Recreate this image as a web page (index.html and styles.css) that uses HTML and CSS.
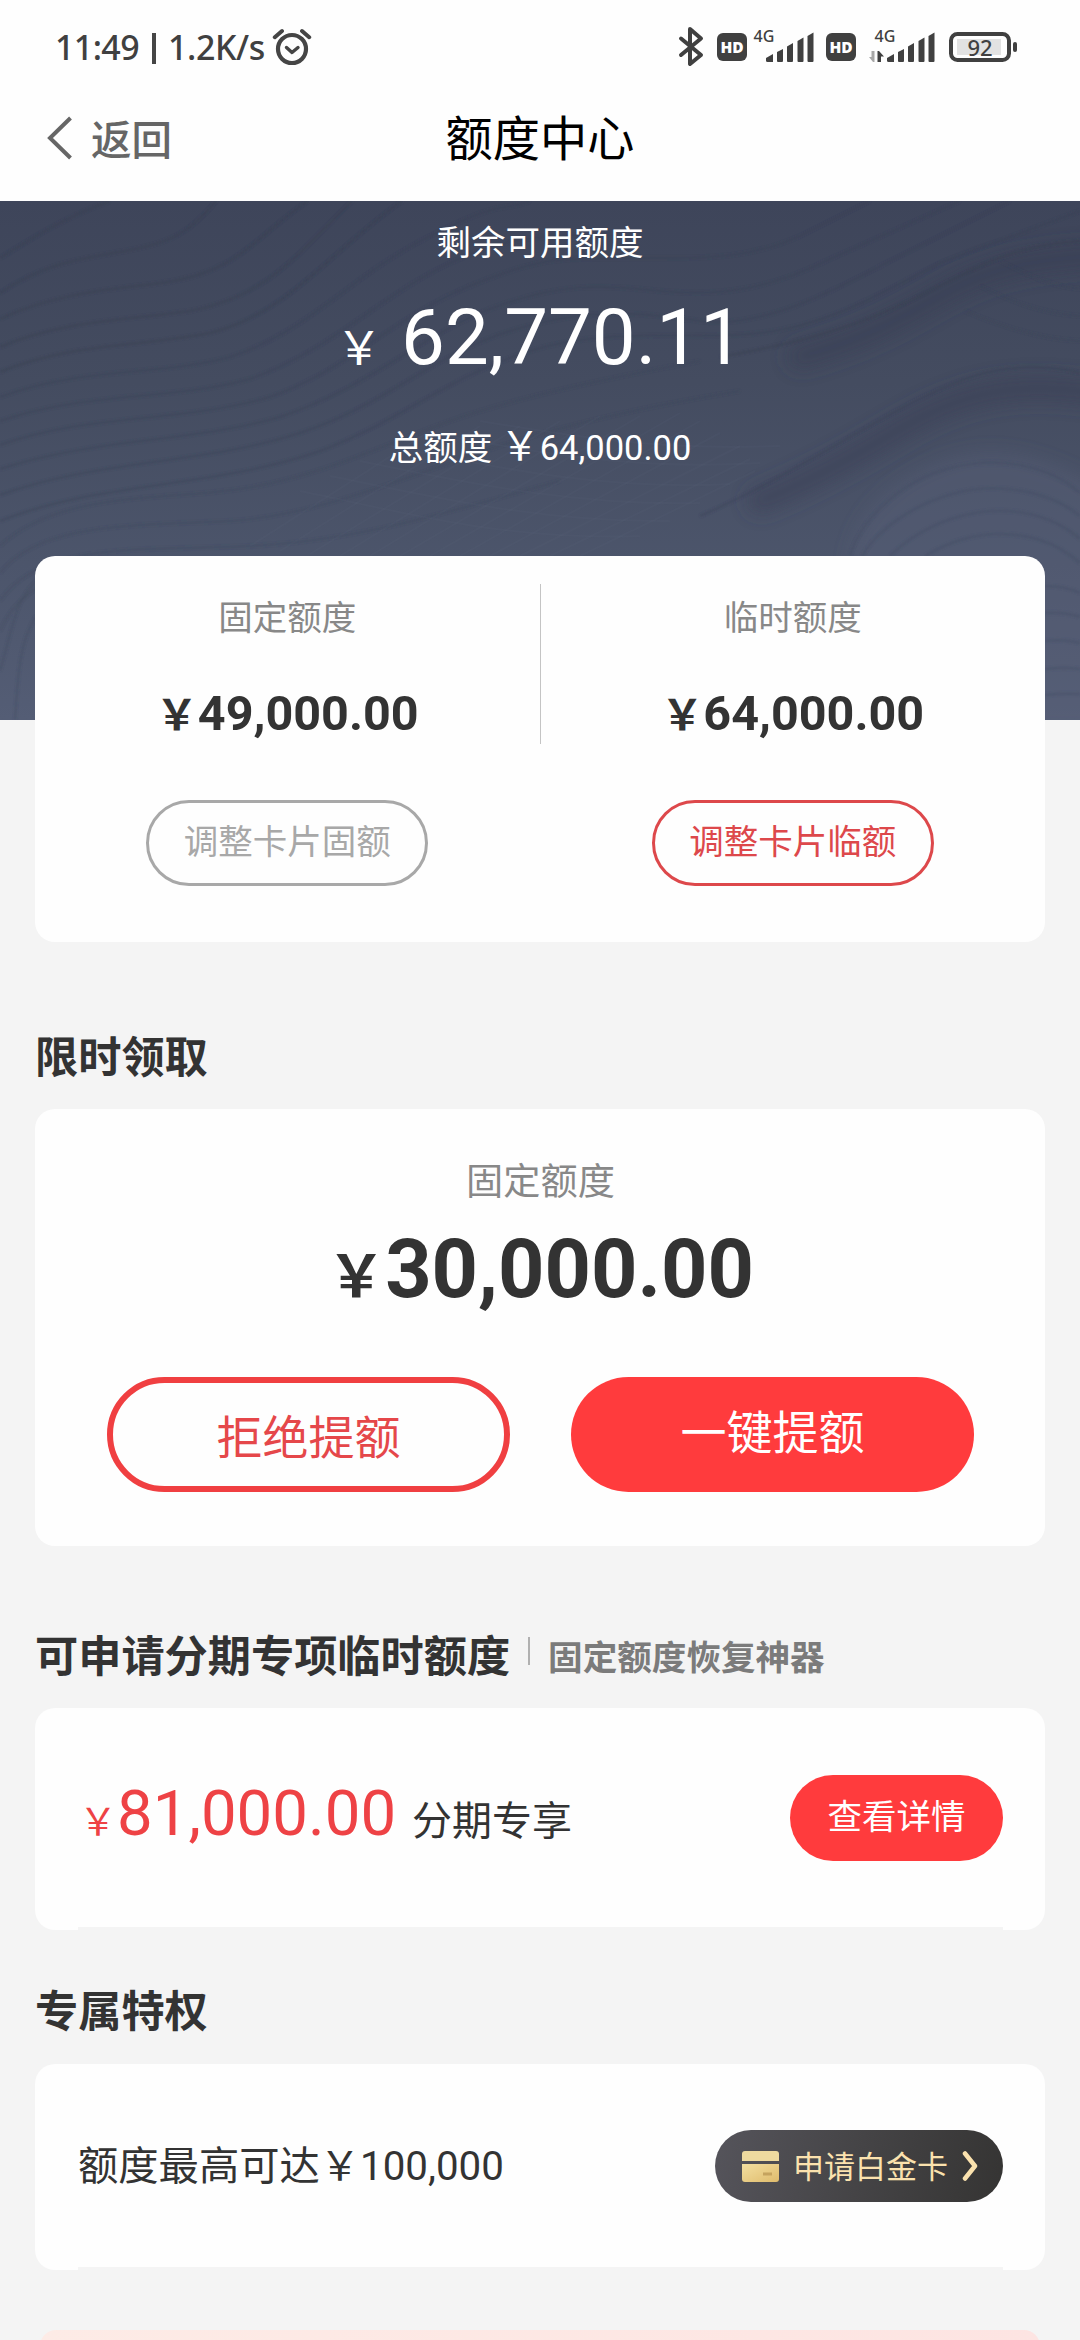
FILE: index.html
```html
<!DOCTYPE html>
<html lang="zh-CN">
<head>
<meta charset="utf-8">
<title>额度中心</title>
<link rel="stylesheet" href="styles.css">
</head>
<body>
<div class="screen">
  <div class="status">
    <div class="status-left">
      <span class="clock">11:49</span>
      <span class="status-bar"></span>
      <span class="speed">1.2K/s</span>
      <svg class="alarm" width="40" height="38" viewBox="0 0 40 38" fill="none" stroke="#454545" stroke-linecap="round" stroke-linejoin="round">
        <circle cx="20" cy="21" r="14" stroke-width="4.2"/>
        <path d="M14.5 19.5l5.5 5 6-5" stroke-width="3.4"/>
        <path d="M2.8 9.2L10 3M37.2 9.2L30 3" stroke-width="4"/>
      </svg>
    </div>
    <svg class="status-right" width="342" height="44" viewBox="678 25 342 44">
      <path d="M681 38.500l20 16.500-11 9V29l11 9.500L681 55" fill="none" stroke="#404040" stroke-width="4" stroke-linecap="round" stroke-linejoin="round"/>
      <g id="hd">
        <rect x="717" y="33" width="30" height="28" rx="6" fill="#404040"/>
        <text x="732" y="53" text-anchor="middle" class="hd-text">HD</text>
      </g>
      <text x="753.500" y="42" class="net-text">4G</text>
      <g id="bars" fill="#404040">
        <path d="M766 60.500V58l7-4v8h-5.500q-1.500 0-1.500-1.500z"/>
        <path d="M777 61V52l6-3v12q0 1-1 1h-4q-1 0-1-1z"/>
        <path d="M787 61V46.500l6-3.500v18q0 1-1 1h-4q-1 0-1-1z"/>
        <path d="M797.500 61V41l6-3.500V61q0 1-1 1h-4q-1 0-1-1z"/>
        <path d="M807.500 61V36l6-3.500V61q0 1-1 1h-4q-1 0-1-1z"/>
      </g>
      <use href="#hd" x="109"/>
      <text x="874.500" y="42" class="net-text">4G</text>
      <path d="M874.500 51v11h-1.500l-4-5h2.500v-6z" fill="#a8a8a8"/>
      <path d="M877.500 62V51h1.500l5 5.500h-3V62z" fill="#404040"/>
      <use href="#bars" x="121"/>
      <rect x="951" y="34" width="58" height="26" rx="6.500" fill="none" stroke="#404040" stroke-width="4"/>
      <rect x="957" y="39" width="44" height="16" fill="#e2e2e2"/>
      <rect x="1013" y="42" width="4" height="10" rx="2" fill="#404040"/>
      <text x="980" y="55.500" text-anchor="middle" class="batt-text">92</text>
    </svg>
  </div>

  <div class="nav">
    <div class="back">
      <svg width="26" height="44" viewBox="0 0 26 44" fill="none" stroke="#666" stroke-width="4"><path d="M23.500 2L3 22l20.500 20"/></svg>
      <span>返回</span>
    </div>
    <div class="nav-title">额度中心</div>
    <div></div>
  </div>

  <div class="hero">
    <svg class="waves" viewBox="0 0 1080 519" fill="none">
      <defs>
        <linearGradient id="base" x1="0" y1="0" x2="0" y2="1">
          <stop offset="0" stop-color="#3e455a"/><stop offset=".35" stop-color="#444c60"/>
          <stop offset=".7" stop-color="#4c556b"/><stop offset="1" stop-color="#545d75"/>
        </linearGradient>
        <filter id="soft" x="-5%" y="-5%" width="110%" height="110%"><feGaussianBlur stdDeviation="1.3"/></filter>
        <filter id="haze" x="-20%" y="-30%" width="140%" height="160%"><feGaussianBlur stdDeviation="9"/></filter>
      </defs>
      <rect width="1080" height="519" fill="url(#base)"/>
      <g filter="url(#haze)" stroke-width="26" stroke-linecap="round">
        <path d="M800 156C860 140 900 118 940 95S1020 58 1110 54" stroke="#363d51" stroke-opacity=".5"/>
        <path d="M760 300C800 285 850 258 900 228S1010 175 1110 195" stroke="#384055" stroke-opacity=".55"/>
      </g>
      <path d="M850 370C848 320 890 280 945 260S1050 258 1110 292V530H850z" fill="#566078" fill-opacity=".45" filter="url(#haze)"/>
      <g filter="url(#soft)">
        <g stroke="#343b4f" stroke-opacity=".4" stroke-width="3">
          <path d="M0 57C25 42 60 18 110 0"/>
          <path d="M0 92C45 62 80 58 125 50S190 32 216 0"/>
          <path d="M0 118C60 90 120 88 160 82 240 72 255 35 308 0"/>
          <path d="M0 146C60 120 120 120 190 110 270 95 300 50 352 0"/>
          <path d="M0 171C70 142 140 146 210 132 290 112 330 50 402 0"/>
          <path d="M720 156C800 142 860 125 920 95S1010 45 1080 40"/>
        </g>
        <g stroke="#383f53" stroke-opacity=".32" stroke-width="3">
          <path d="M0 196C80 166 160 175 230 156 310 130 350 75 430 35S500 12 530 0"/>
          <path d="M0 220C90 190 170 200 250 178 330 150 380 95 450 62S560 35 640 35"/>
          <path d="M0 244C90 212 180 222 270 196 350 168 390 118 470 85S570 58 630 57 740 62 800 35L870 0"/>
          <path d="M0 268C100 236 190 242 280 216 370 186 420 135 490 108S600 84 660 90 770 88 830 58L960 0"/>
          <path d="M0 294C100 258 200 264 300 232 390 202 430 155 510 130S640 112 700 120 830 92 890 60L1010 0"/>
          <path d="M0 320C100 280 210 288 320 250 400 220 450 175 530 150S690 140 760 132 880 92 940 62L1080 10"/>
          <path d="M700 315C770 285 840 240 900 208S1010 155 1080 172"/>
        </g>
        <g stroke="#3c4358" stroke-opacity=".22" stroke-width="3">
          <path d="M0 345C60 290 160 300 240 288S380 245 450 220 620 175 700 160"/>
          <path d="M0 372C40 320 140 325 230 320S420 270 500 245 650 205 740 190"/>
          <path d="M0 400C40 340 140 350 250 345S450 310 560 280"/>
          <path d="M0 430C30 360 110 365 260 362"/>
          <path d="M0 470C15 420 15 390 50 370"/>
          <path d="M15 519C18 470 20 440 36 415"/>
          <path d="M1000 60C1030 75 1050 85 1080 88M980 85C1010 100 1040 112 1080 115M965 110C1000 125 1040 138 1080 140"/>
        </g>
        <g stroke="#414a60" stroke-opacity=".38" stroke-width="3">
          <path d="M850 355C860 320 900 280 950 267S1050 265 1080 292"/>
          <path d="M862 355C880 325 920 300 960 291S1050 290 1080 315"/>
          <path d="M890 355C910 335 940 318 975 312S1050 312 1080 338"/>
          <path d="M925 355C950 340 975 333 1000 333S1055 340 1080 362"/>
          <path d="M1045 385Q1065 385 1080 392M1045 412Q1065 411 1080 416M1045 440Q1065 438 1080 442M1045 468Q1065 466 1080 468M1045 494Q1065 492 1080 493"/>
        </g>
      </g>
      <g stroke="#69738a" stroke-opacity=".09" stroke-width="2">
        <path d="M250 345L430 230M280 350L480 225M310 353L520 225M340 355L560 220M370 355L600 215M400 355L640 215M430 355L680 212M460 355L700 220M490 355L720 232M520 355L740 245M550 355L750 258M580 355L755 270"/>
        <path d="M300 290C400 310 500 340 640 335M330 275C430 295 540 322 670 320M360 260C460 280 570 305 700 302M390 245C490 265 600 290 730 283M430 232C530 250 630 270 760 262M480 220C570 235 660 250 780 245"/>
      </g>
    </svg>
    <div class="hero-label">剩余可用额度</div>
    <div class="hero-amount"><span class="yen">￥</span>62,770.11</div>
    <div class="hero-total">总额度<span class="yen">￥</span>64,000.00</div>
  </div>

  <div class="card limits">
    <div class="limit">
      <div class="label">固定额度</div>
      <div class="limit-amount"><span class="yen">￥</span>49,000.00</div>
      <div class="pill pill-gray">调整卡片固额</div>
    </div>
    <div class="divider"></div>
    <div class="limit">
      <div class="label">临时额度</div>
      <div class="limit-amount"><span class="yen">￥</span>64,000.00</div>
      <div class="pill pill-red">调整卡片临额</div>
    </div>
  </div>

  <h2 class="heading heading-offer">限时领取</h2>
  <div class="card offer">
    <div class="offer-label">固定额度</div>
    <div class="offer-amount"><span class="yen">￥</span>30,000.00</div>
    <div class="offer-actions">
      <div class="btn btn-outline">拒绝提额</div>
      <div class="btn btn-solid">一键提额</div>
    </div>
  </div>

  <div class="heading-row">
    <h2 class="heading">可申请分期专项临时额度</h2>
    <span class="heading-sep"></span>
    <span class="heading-sub">固定额度恢复神器</span>
  </div>
  <div class="card row-card installment">
    <div class="installment-amount"><span class="yen">￥</span>81,000.00<span class="tag">分期专享</span></div>
    <div class="detail-btn">查看详情</div>
  </div>

  <h2 class="heading heading-perk">专属特权</h2>
  <div class="card row-card perk">
    <div class="perk-text">额度最高可达￥100,000</div>
    <div class="gold-btn">
      <svg width="37" height="31" viewBox="0 0 37 31">
        <defs><linearGradient id="gold" x1="0" y1="0" x2="1" y2="1"><stop offset="0" stop-color="#f3dfa0"/><stop offset="1" stop-color="#dfbb6c"/></linearGradient></defs>
        <path d="M3 0h31q3 0 3 3v7H0V3q0-3 3-3z" fill="#eeda9f"/>
        <path d="M0 13h37v15q0 3-3 3H3q-3 0-3-3z" fill="url(#gold)"/>
        <path d="M21 23h9" stroke="#c5a35e" stroke-width="3"/>
      </svg>
      <span>申请白金卡</span>
      <svg class="chev" width="16" height="30" viewBox="0 0 16 30" fill="none" stroke="#fbe2ae" stroke-width="4.500" stroke-linecap="round" stroke-linejoin="round"><path d="M3 2.500L13 15 3 27.500"/></svg>
    </div>
  </div>
  <div class="promo"></div>
</div>
</body>
</html>
```
FILE: styles.css
```css
* { box-sizing: border-box; }

body {
  margin: 0;
  background: #f4f4f4;
  font-family: Roboto, "Noto Sans CJK SC", sans-serif;
  color: #333;
}

.screen {
  width: 1080px;
  height: 2340px;
  overflow: hidden;
  background: #f4f4f4;
}

/* status bar */
.status {
  height: 78px;
  padding: 25px 60px 0 55px;
  background: #fefefe;
  display: flex;
  justify-content: space-between;
  align-items: flex-start;
}
.status-left {
  display: flex;
  align-items: center;
  height: 44px;
  font: 500 34px/44px "Noto Sans", sans-serif;
  color: #404040;
}
.clock { letter-spacing: -.6px; }
.status-bar { width: 4px; height: 31px; margin: 3px 12px 0 13px; background: #454545; }
.speed { letter-spacing: -.4px; }
.alarm { margin-left: 7px; }
.hd-text { font: 800 15.500px "Open Sans", sans-serif; fill: #fff; }
.net-text { font: 500 16px "Noto Sans", sans-serif; fill: #404040; }
.batt-text { font: 500 22px "Noto Sans", sans-serif; fill: #404040; }

/* navigation */
.nav {
  height: 123px;
  padding: 0 47px;
  background: #fefefe;
  display: grid;
  grid-template-columns: 1fr auto 1fr;
}
.back {
  display: flex;
  height: 120px;
  align-items: center;
  gap: 18px;
  font-size: 40.500px;
  font-weight: 500;
  color: #666;
}
.back span { line-height: 60px; margin-top: 5px; }
.nav-title { font-size: 47.200px; line-height: 124px; color: #000; }

/* hero */
.hero {
  position: relative;
  height: 519px;
  padding-top: 18px;
  background: #485066;
  color: #fff;
  text-align: center;
}
.waves { position: absolute; left: 0; top: 0; width: 100%; height: 100%; }
.hero-label, .hero-amount, .hero-total { position: relative; }
.hero-label { font-size: 34.500px; line-height: 48px; }
.hero-amount { margin-top: 22px; font-size: 78px; line-height: 97px; }
.hero-total { margin-top: 38px; font-size: 34.500px; line-height: 49px; }

.yen { line-height: 0; }
.hero-amount .yen { font-size: 46px; margin-right: 19px; }
.hero-total .yen { font-size: 39.500px; margin-left: 8px; }

/* cards */
.card {
  margin: 0 35px;
  border-radius: 20px;
  background: #fefefe;
}
.limits {
  position: relative;
  margin-top: -164px;
  height: 386px;
  display: grid;
  grid-template-columns: 1fr 1px 1fr;
}
.divider { height: 160px; margin-top: 28px; background: #c4c4c4; }
.limit {
  padding-top: 38px;
  display: flex;
  flex-direction: column;
  align-items: center;
}
.label { font-size: 34.500px; line-height: 48px; color: #888; }
.limit-amount { margin-top: 42px; font-size: 48.500px; line-height: 60px; font-weight: 700; }
.limit-amount .yen { font-size: 42px; }
.pill {
  margin-top: 56px;
  width: 282px;
  height: 86px;
  border: 3px solid;
  border-radius: 43px;
  font-size: 34.500px;
  line-height: 79px;
  text-align: center;
}
.pill-gray { color: #a8a8a8; }
.pill-red { color: #dd484b; }

/* headings */
.heading { margin: 0 35px; font-size: 43.200px; line-height: 60px; font-weight: 700; }
.heading-offer { margin-top: 87px; margin-bottom: 20px; }
.heading-perk { margin-top: 53px; margin-bottom: 21px; }
.heading-row { display: flex; align-items: center; margin: 82px 35px 20px; }
.heading-row .heading { margin: 0; }
.heading-sep { width: 2px; height: 28px; margin: 0 18px 14px 18px; background: #b0b0b0; }
.heading-sub { font-size: 34.600px; line-height: 48px; font-weight: 700; color: #7b7b7b; }

/* limited-time offer */
.offer { height: 437px; padding: 49px 71px 0 72px; text-align: center; }
.offer-label { font-size: 37.200px; line-height: 48px; color: #888; }
.offer-amount { margin-top: 15px; font-size: 81px; line-height: 97px; font-weight: 700; }
.offer-amount .yen { font-size: 58px; }
.offer-actions { display: grid; grid-template-columns: 403px 403px; gap: 61px; margin-top: 59px; }
.btn { height: 115px; border-radius: 58px; font-size: 46px; line-height: 113px; }
.btn-outline { border: 6px solid #f03f41; color: #e5474a; line-height: 103px; padding-top: 4px; }
.btn-solid { background: #ff3b3d; color: #fff; }

/* single-row cards */
.row-card {
  display: flex;
  justify-content: space-between;
  align-items: flex-start;
  background: linear-gradient(#f4f4f4, #f4f4f4) 43px 100% / 925px 3px no-repeat #fefefe;
}
.installment { height: 222px; padding: 67px 42px 0 44px; }
.installment-amount { font-size: 63.500px; line-height: 77px; color: #ee4245; }
.installment-amount .yen { font-size: 38px; }
.tag { margin-left: 16px; font-size: 40px; line-height: 0; color: #333; }
.detail-btn {
  width: 213px;
  height: 86px;
  border-radius: 43px;
  background: #ff3b3d;
  color: #fff;
  font-size: 34.500px;
  line-height: 85px;
  text-align: center;
}
.perk { height: 206px; padding: 66px 42px 0 43px; }
.perk-text { font-size: 40.300px; line-height: 73px; }
.gold-btn {
  width: 288px;
  height: 72px;
  padding-left: 27px;
  border-radius: 36px;
  background: linear-gradient(100deg, #55545b, #454446 50%, #353433);
  color: #fbe2ae;
  display: flex;
  align-items: center;
  font-size: 31px;
  line-height: 72px;
}
.gold-btn span { margin-left: 14px; margin-top: 3px; }
.chev { margin-left: 14px; }

.promo {
  margin: 60px 40px 0;
  height: 40px;
  border-radius: 16px;
  background: linear-gradient(90deg, #fdebe6, #fde4e2);
}
```
